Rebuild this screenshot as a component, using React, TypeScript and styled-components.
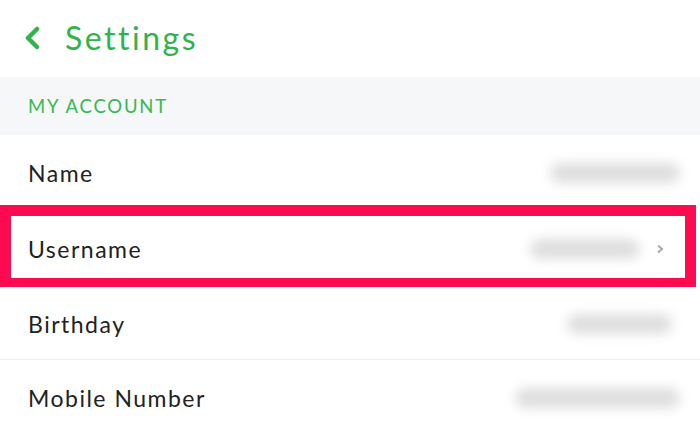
import React from "react";
import styled, { createGlobalStyle } from "styled-components";

const Global = createGlobalStyle`
  html, body { margin: 0; padding: 0; background: #fff; }
  body { font-family: "Lato", "Noto Sans", sans-serif; }
`;

const Page = styled.div`
  width: 700px;
  height: 428px;
  overflow: hidden;
  background: #fff;
  display: flex;
  flex-direction: column;
`;

const Header = styled.header`
  height: 77px;
  display: flex;
  align-items: center;
  padding-left: 24px;
  gap: 25px;
  box-sizing: border-box;
  padding-bottom: 2px;
`;

const Title = styled.h1`
  margin: 0;
  font-size: 32px;
  font-weight: 400;
  color: #2fb34b;
  letter-spacing: 2.5px;
`;

const SectionHead = styled.div`
  height: 58px;
  background: #f6f7f8;
  display: flex;
  align-items: center;
  padding-left: 28px;
  font-size: 18.5px;
  color: #36b852;
  letter-spacing: 1.8px;
`;

const Row = styled.div<{ $hl?: boolean; $line?: boolean; $h: number; $pt: number }>`
  height: ${(p) => p.$h}px;
  display: flex;
  align-items: center;
  box-sizing: border-box;
  padding-top: ${(p) => p.$pt}px;
  padding-left: ${(p) => (p.$hl ? "17px" : "28px")};
  padding-right: 28px;
  width: ${(p) => (p.$hl ? "696px" : "700px")};
  border: ${(p) => (p.$hl ? "11px solid #fd0a51" : "none")};
  border-bottom: ${(p) => (p.$hl ? "9px solid #fd0a51" : p.$line ? "1px solid #eeeeee" : "none")};
`;

const Label = styled.span`
  font-size: 23px;
  color: #222;
  flex: 1;
  letter-spacing: 1.5px;
`;

const Blur = styled.div<{ $w: number; $off: number }>`
  width: ${(p) => p.$w}px;
  height: 20px;
  margin-right: ${(p) => p.$off}px;
  background: #dedede;
  border-radius: 10px;
  filter: blur(6px);
`;

const Chevron = styled.svg`
  width: 8px;
  height: 10px;
  margin-right: -7px;
  margin-left: 16px;
`;

const BackIcon = () => (
  <svg width="16" height="24" viewBox="0 0 16 24">
    <path d="M13 3 L4 12 L13 21" stroke="#2fb34b" strokeWidth="4.5" fill="none" strokeLinecap="round" strokeLinejoin="round" />
  </svg>
);

export default function App() {
  return (
    <Page>
      <Global />
      <Header>
        <BackIcon />
        <Title>Settings</Title>
      </Header>
      <SectionHead>MY ACCOUNT</SectionHead>
      <Row $h={70} $pt={5}>
        <Label>Name</Label>
        <Blur $w={130} $off={-8} />
      </Row>
      <Row $hl $h={82} $pt={3}>
        <Label>Username</Label>
        <Blur $w={110} $off={0} />
        <Chevron viewBox="0 0 8 10">
          <path d="M2 1.5 L6 5 L2 8.5" stroke="#aaa" strokeWidth="2" fill="none" />
        </Chevron>
      </Row>
      <Row $line $h={73} $pt={2}>
        <Label>Birthday</Label>
        <Blur $w={105} $off={0} />
      </Row>
      <Row $h={68} $pt={8}>
        <Label>Mobile Number</Label>
        <Blur $w={165} $off={-8} />
      </Row>
    </Page>
  );
}
